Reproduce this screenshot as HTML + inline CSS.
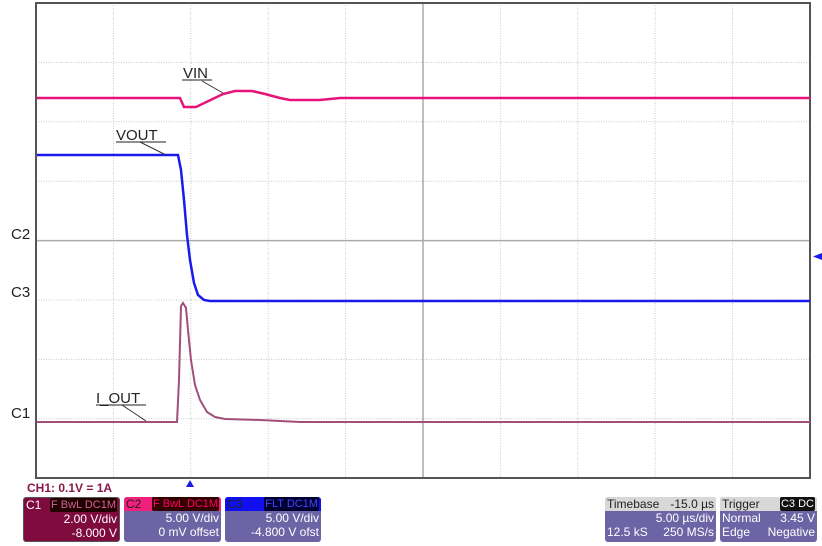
<!DOCTYPE html>
<html><head><style>
body{margin:0;width:822px;height:546px;background:#fff;overflow:hidden;font-family:"Liberation Sans",sans-serif}
svg{position:absolute;left:0;top:0}
.p{position:absolute;border-radius:3px;color:#fff;font-size:12px;line-height:14px;box-sizing:border-box;white-space:nowrap;overflow:hidden}
.h{display:flex;justify-content:space-between;height:14px;padding:0 2px;font-size:12px}
.r{text-align:right;padding-right:2px}
.t{font-size:11px;padding:0 1px;border-radius:2px}
</style></head><body>
<svg width="822" height="546">
<g stroke="#c8c8c8" stroke-dasharray="1,1.5" stroke-width="1">
<line x1="113.4" y1="3" x2="113.4" y2="478"/><line x1="190.8" y1="3" x2="190.8" y2="478"/><line x1="268.2" y1="3" x2="268.2" y2="478"/><line x1="345.6" y1="3" x2="345.6" y2="478"/><line x1="500.4" y1="3" x2="500.4" y2="478"/><line x1="577.8" y1="3" x2="577.8" y2="478"/><line x1="655.2" y1="3" x2="655.2" y2="478"/><line x1="732.6" y1="3" x2="732.6" y2="478"/>
<line x1="36" y1="62.4" x2="810" y2="62.4"/><line x1="36" y1="121.8" x2="810" y2="121.8"/><line x1="36" y1="181.2" x2="810" y2="181.2"/><line x1="36" y1="300" x2="810" y2="300"/><line x1="36" y1="359.4" x2="810" y2="359.4"/><line x1="36" y1="418.8" x2="810" y2="418.8"/>
</g>
<g stroke="#aaa" stroke-width="1.5"><line x1="36" y1="240.6" x2="810" y2="240.6"/><line x1="423" y1="3" x2="423" y2="478"/></g>
<rect x="36" y="3" width="774" height="475" fill="none" stroke="#555" stroke-width="2"/>
<polyline fill="none" stroke="#e8137a" stroke-width="2.5" points="37,98 180,98 184,107 196,107 223,94 235,91 252,91 265,94 280,98 290,100 320,100 340,98 810,98"/>
<polyline fill="none" stroke="#1a1aee" stroke-width="2.5" points="37,155 178,155 181,170 184,200 187,235 190,260 194,283 198,295 204,300 210,301 810,301"/>
<polyline fill="none" stroke="#a0507a" stroke-width="2" points="37,422 177,422 179,380 181,306 183,303 186,308 188,330 191,360 195,385 200,400 207,412 215,417 225,419 260,420 300,422 810,422"/>
<g stroke="#333" stroke-width="1"><line x1="202" y1="81" x2="223" y2="93"/><line x1="140" y1="142" x2="166" y2="155"/><line x1="122" y1="405" x2="146" y2="421"/></g>
<g font-size="15" fill="#222"><text x="183" y="78">VIN</text><text x="116" y="140">VOUT</text><text x="96" y="403">I_OUT</text>
<text x="11" y="239">C2</text><text x="11" y="297">C3</text><text x="11" y="418">C1</text></g>
<g stroke="#222"><line x1="182" y1="80" x2="212" y2="80"/><line x1="116" y1="142" x2="166" y2="142"/><line x1="96" y1="405" x2="146" y2="405"/></g>
<polygon points="822,253 813,256.5 822,260" fill="#1a1aee"/>
<polygon points="190,480 186,487 194,487" fill="#1a1aee"/>
<text x="27" y="492" font-size="12" font-weight="bold" fill="#8a1848">CH1: 0.1V = 1A</text>
</svg>
<div class="p" style="left:23px;top:497px;width:97px;height:45px;background:#7e0a3e;border:1px solid #555"><div class="h"><span>C1</span><span class="t" style="background:#200;color:#c69">F BwL DC1M</span></div><div class="r">2.00 V/div</div><div class="r">-8.000 V</div></div>
<div class="p" style="left:124px;top:497px;width:97px;height:45px;background:#6c64a4"><div class="h" style="background:#f0207c;color:#222"><span>C2</span><span class="t" style="background:#300;color:#f06">F BwL DC1M</span></div><div class="r">5.00 V/div</div><div class="r">0 mV offset</div></div>
<div class="p" style="left:225px;top:497px;width:96px;height:45px;background:#6c64a4"><div class="h" style="background:#1010ee;color:#222"><span>C3</span><span class="t" style="background:#003;color:#44f">FLT DC1M</span></div><div class="r">5.00 V/div</div><div class="r">-4.800 V ofst</div></div>
<div class="p" style="left:605px;top:497px;width:111px;height:45px;background:#6c64a4"><div class="h" style="background:#d8d8d8;color:#222"><span>Timebase</span><span>-15.0 µs</span></div><div class="r">5.00 µs/div</div><div class="h"><span>12.5 kS</span><span>250 MS/s</span></div></div>
<div class="p" style="left:720px;top:497px;width:97px;height:45px;background:#6c64a4"><div class="h" style="background:#d8d8d8;color:#222"><span>Trigger</span><span class="t" style="background:#111;color:#fff">C3 DC</span></div><div class="h"><span>Normal</span><span>3.45 V</span></div><div class="h"><span>Edge</span><span>Negative</span></div></div>
</body></html>
